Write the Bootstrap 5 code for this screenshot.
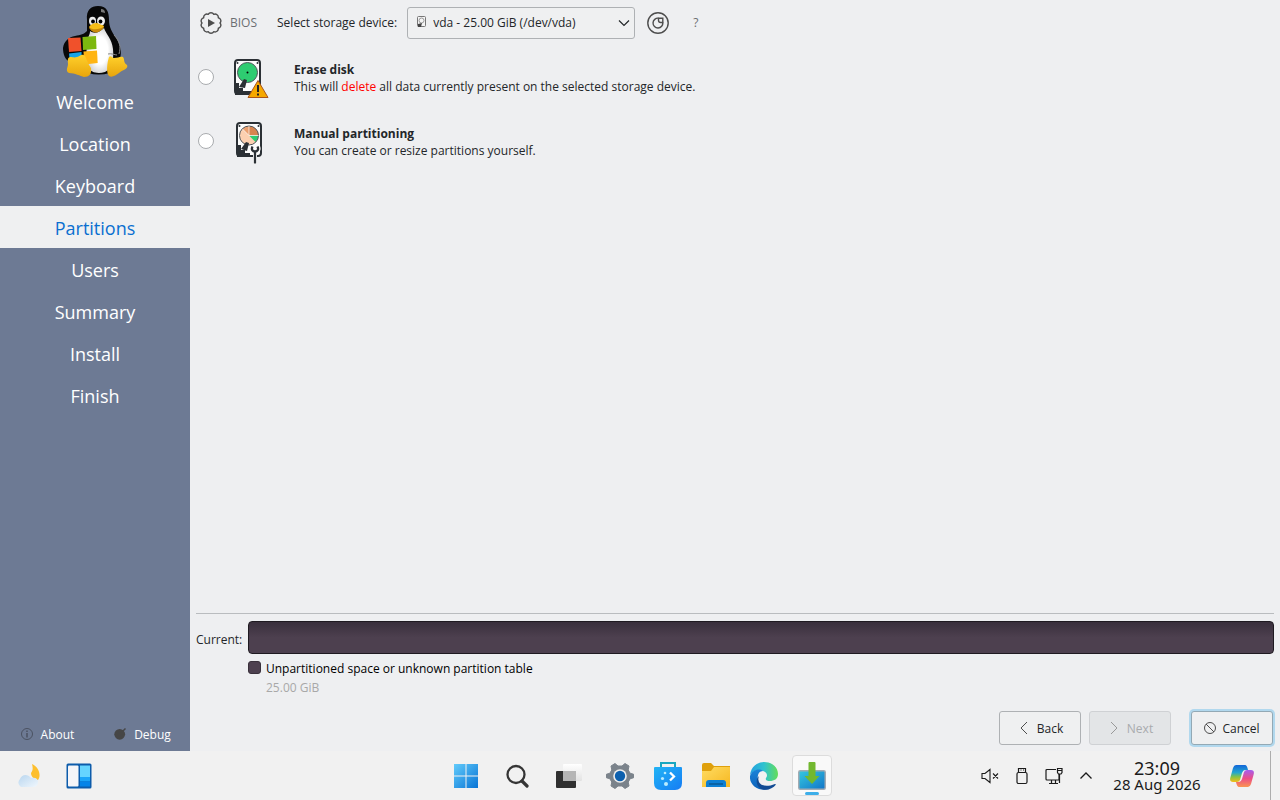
<!DOCTYPE html>
<html lang="en">
<head>
<meta charset="utf-8">
<meta name="viewport" content="width=device-width, initial-scale=1">
<title>Installer – Partitions</title>
<link href="https://cdn.jsdelivr.net/npm/bootstrap@5.3.0/dist/css/bootstrap.min.css" rel="stylesheet">
<style>
  body { font: 13px/17px "Noto Sans", "Open Sans", sans-serif; background: #eeeff1; color: #232629; }
  button { font: inherit; color: inherit; background: none; border: 0; padding: 0; }
  svg { display: block; flex: none; }
  .app-text { font-family: "Open Sans", sans-serif; font-size: 12px; }

  .sidebar { width: 190px; background: #6d7a94; color: #fff; }
  .sidebar .logo { height: 80px; }
  .step { height: 42px; padding-top: 2px; font-size: 18px; color: #fff; text-decoration: none; }
  .step.active { background: #eff0f1; color: #0a6fd0; }
  .side-foot { height: 34px; }

  .page { padding: 6px; }
  .toolbar { height: 33px; }
  .toolbar .mode { color: #6b6e71; }
  .device-box { position: relative; width: 228px; margin-left: 10px; }
  .device-box svg { position: absolute; left: 10px; top: 9px; pointer-events: none; }
  .device { appearance: none; font: inherit; color: inherit; height: 32px; padding: 0 28px 0 25px; border: 1px solid #aeb1b4; border-radius: 3px;
    background: #eff0f1 url("data:image/svg+xml,%3Csvg xmlns='http://www.w3.org/2000/svg' width='12' height='8'%3E%3Cpath d='M1 1.500l5 5 5-5' fill='none' stroke='%23232629' stroke-width='1.200'/%3E%3C/svg%3E") no-repeat right 4px center / 12px 8px; }
  .choices { margin-top: 9px; }
  .choice { height: 64px; }
  .choice label { padding-top: 13px; }
  .choice input { width: 16px; height: 16px; margin: 0 0 0 2px; background-color: #fff; border: 1px solid #a9acaf; }
  .choice .pic { width: 36px; margin: 0 25px 0 19px; }
  .del { color: #f00; }

  .rule { border-top: 1px solid #b9bcbf; margin-bottom: 7px; }
  .bar-label { width: 52px; padding-top: 3px; }
  .disk-bar { height: 33px; border: 1px solid #1f1a21; border-radius: 4px; background: linear-gradient(#392f3c, #4d404f 50%, #4d404f); }
  .legend { margin: 6px 0 0 52px; gap: 0 5px; }
  .swatch { width: 13px; height: 13px; border: 1px solid #39303b; border-radius: 3px; background: #4d404f; margin-top: 1px; }
  .size { color: #a8a8a8; margin-top: 2px; }
  .nav-row { margin-top: 15px; gap: 8px; }
  .nav-btn { width: 82px; height: 34px; border: 1px solid #aeb1b4; border-radius: 3px; background: #eff0f1; gap: 6px; }
  .nav-btn:disabled { background: #e3e5e7; border-color: #cfd1d4; color: #a9abae; }
  .nav-btn.focused { margin-left: 12px; border-color: #93a9b5; box-shadow: 0 0 0 2px #b1d8ee; margin-right: 1px; }

  .taskbar { height: 49px; background: #f1f1f1; display: grid; grid-template-columns: 1fr auto 1fr; padding-right: 4px; color: #1b1b1b; }
  .task { width: 48px; height: 49px; }
  .task.wide { width: 52px; }
  .task.running { position: relative; }
  .task.running span { width: 40px; height: 41px; border: 1px solid #dcdcdc; border-radius: 4px; background: #f9f9f9; }
  .task.running::after { content: ""; position: absolute; bottom: 5px; left: 17px; width: 14px; height: 3px; border-radius: 2px; background: #3daee9; }
  .tray { width: 32px; height: 49px; }
  .clock { width: 102px; margin: 0 12px 0 4px; font-size: 15px; line-height: 16px; }
  .clock .time { font-size: 18px; }
  .copilot { width: 44px; margin-right: 6px; }
  .peek { width: 6px; border-left: 1px solid #adadad; }
</style>
</head>
<body>
<div class="d-flex flex-column min-vh-100">
  <div class="d-flex flex-grow-1 app-text">
    <aside class="sidebar d-flex flex-column flex-shrink-0">
      <div class="logo d-flex justify-content-center pt-1">
        <svg width="70" height="76" viewBox="0 0 70 76">
          <defs><linearGradient id="ft" x2="0" y2="1"><stop stop-color="#ffd02b"/><stop offset="1" stop-color="#e8a50c"/></linearGradient>
          <radialGradient id="bl"><stop offset=".6" stop-color="#fff"/><stop offset="1" stop-color="#d9d9d9"/></radialGradient></defs>
          <path d="M27 16C26 6 31 2 38 2c9 0 11 6 11 14 0 7 3 12 7 18 5 8 7 17 2 24l-8 11q-12 3-22 0L10 58c-5-2-7-8-7-14 1-7 6-11 12-12 6-1 9-2 12-5z" fill="#080808"/>
          <path d="M30 27c4 3 9 2 14-3 2 6 8 11 9 21 1 11-1 20-8 23-7 2-14 1-17-5-2-8-2-22 0-29 1-3 2-4 2-7z" fill="url(#bl)"/>
          <path d="M41 5q4 0 4 4l-4-1z" fill="#777"/>
          <ellipse cx="32.500" cy="17" rx="3.500" ry="4.200" fill="#eee"/><ellipse cx="41" cy="17" rx="4" ry="4.500" fill="#eee"/>
          <circle cx="33" cy="17.500" r="1.900"/><circle cx="40.500" cy="17.500" r="1.900"/>
          <path d="M29 23c2-3 5-4 7-4s6 2 8 3c0 3-6 6-8 6s-6-3-7-5z" fill="#f6bd18"/><path d="M29 23.500c4 3 11 2 15-1-2 4-6 6-8 6s-6-2-7-5z" fill="#c98a0a"/>
          <path d="M48 50c3-1 7 1 9 1M54 31c6 6 7 12 5 19" fill="none" stroke="#888"/>
          <path d="M8 34l12.500-.500 1 13.500L9 48z" fill="#f0512b"/><path d="M22.500 33L36 32l.500 13-13.500 1z" fill="#7cb80f"/><path d="M9 49.500l12.500-1.500.500 11H10z" fill="#18a4e8"/><path d="M23.500 47.500l13.500-1 .700 12.500-13.500 1.500z" fill="#ffb513"/>
          <path d="M10 53c3 0 4 1 7 0 3-1 5-4 8-1 2 4 3 8 6 12 1 6-2 9-7 9-4-1-9-4-15-4-4-2-1-6-1-9 0-3-1-6 2-7z" fill="url(#ft)"/>
          <path d="M49 53c2-2 3 1 5 1 4 0 6-2 9-1 2 3 0 5 4 8 2 4-5 5-8 8-3 2-7 5-10 3-3-3-2-13 0-19z" fill="url(#ft)"/>
        </svg>
      </div>
      <nav class="d-flex flex-column">
        <a href="#" class="step d-flex align-items-center justify-content-center">Welcome</a>
        <a href="#" class="step d-flex align-items-center justify-content-center">Location</a>
        <a href="#" class="step d-flex align-items-center justify-content-center">Keyboard</a>
        <a href="#" class="step active d-flex align-items-center justify-content-center" aria-current="step">Partitions</a>
        <a href="#" class="step d-flex align-items-center justify-content-center">Users</a>
        <a href="#" class="step d-flex align-items-center justify-content-center">Summary</a>
        <a href="#" class="step d-flex align-items-center justify-content-center">Install</a>
        <a href="#" class="step d-flex align-items-center justify-content-center">Finish</a>
      </nav>
      <div class="side-foot d-flex mt-auto">
        <button type="button" class="d-flex w-50 align-items-center justify-content-center gap-2">
          <svg width="12" height="12" viewBox="0 0 12 12" fill="none" stroke="#4b5261"><circle cx="6" cy="6" r="5.500"/><path d="M6 5v4.500M6 2.500V4" stroke-width="1.500"/></svg>
          About</button>
        <button type="button" class="d-flex w-50 align-items-center justify-content-center gap-2">
          <svg width="12" height="12" viewBox="0 0 12 12"><circle cx="5.700" cy="6.300" r="5.400" fill="#464646"/><path d="M8.500 3.500l3-3" stroke="#464646" stroke-width="1.500"/></svg>
          Debug</button>
      </div>
    </aside>

    <main class="page d-flex flex-column flex-grow-1">
      <div class="toolbar d-flex align-items-center">
        <svg class="ms-1" width="22" height="22" viewBox="0 0 22 22"><path d="M20 11A3.200 3.200 0 0 1 18.300 16.300A3.200 3.200 0 0 1 13.800 19.600A3.200 3.200 0 0 1 8.200 19.600A3.200 3.200 0 0 1 3.700 16.300A3.200 3.200 0 0 1 2 11A3.200 3.200 0 0 1 3.700 5.700A3.200 3.200 0 0 1 8.200 2.400A3.200 3.200 0 0 1 13.800 2.400A3.200 3.200 0 0 1 18.300 5.700A3.200 3.200 0 0 1 20 11z" fill="none" stroke="#4d4d4d" stroke-width="1.400" stroke-linejoin="round"/><path d="M8 7l7 4-7 4z" fill="#4d4d4d"/></svg>
        <span class="mode ms-2">BIOS</span>
        <label for="device" class="ps-3 ms-1">Select storage device:</label>
        <div class="device-box">
          <select id="device" class="device w-100"><option>vda - 25.00 GiB (/dev/vda)</option></select>
          <svg width="9" height="12" viewBox="0 0 9 12"><rect x=".5" y=".5" width="8" height="10" rx="1" fill="#f5f5f5" stroke="#777"/><circle cx="4.500" cy="4.500" r="2.500" fill="none" stroke="#999"/><path d="M1 11V8l4-1-1 4z" fill="#444"/></svg>
        </div>
        <button type="button" class="ms-2 ps-1" aria-label="Partition table"><svg width="22" height="22" viewBox="0 0 22 22" fill="none" stroke="#4d4d4d" stroke-width="1.400"><circle cx="11" cy="11" r="10.200"/><path d="M11.500 6.200A4.900 4.900 0 1 0 15.800 10.500"/><path d="M11.500 6.200h4.300v4.300h-2q-2.300 0-2.300-2.300z"/></svg></button>
        <button type="button" class="mode ms-4">?</button>
      </div>

      <div class="choices">
        <div class="choice d-flex align-items-start">
          <div class="d-flex align-items-center">
            <input class="form-check-input" type="radio" name="mode" id="erase">
            <svg class="pic" height="58" viewBox="0 0 36 58">
              <g transform="translate(0 11)"><rect x="2" y="1" width="25" height="34" rx="3" fill="#fcfcfc" stroke="#2b3035" stroke-width="2"/>
              <circle cx="14.500" cy="13.500" r="10" fill="#2ecc71" stroke="#4d5358"/><circle cx="14.500" cy="13.500" r="1"/>
              <path d="M2 24h4v5h4v3h9v4H2zM6 28l5-8 3 1-2 8z" fill="#2b3035"/>
              <g fill="#2b3035"><circle cx="4.500" cy="4" r="1"/><circle cx="24.500" cy="4" r="1"/></g>
              <path d="M25 21.500L35 38.500H15z" fill="#f6a800" stroke="#a9541b" stroke-linejoin="round"/><path d="M25 26v7M25 34.500v2" stroke="#222" stroke-width="2"/></g>
            </svg>
          </div>
          <label for="erase"><strong>Erase disk</strong><br>This will <span class="del">delete</span> all data currently present on the selected storage device.</label>
        </div>
        <div class="choice d-flex align-items-start">
          <div class="d-flex align-items-center">
            <input class="form-check-input" type="radio" name="mode" id="manual">
            <svg class="pic" height="58" viewBox="0 0 36 58">
              <g transform="translate(2 10)"><rect x="2" y="1" width="24" height="33" rx="3" fill="#fcfcfc" stroke="#2b3035" stroke-width="2"/>
              <circle cx="14" cy="13.500" r="9.500" fill="#fcd0b0"/><path d="M14 13.500L7.500 7A9.500 9.500 0 0 1 14 4z" fill="#eaa070"/><path d="M14 13.500V4a9.500 9.500 0 0 1 9.500 9.500z" fill="#d8854f"/><path d="M14 13.500h9.500a9.500 9.500 0 0 1-3 6.500z" fill="#2ecc71"/><circle cx="14" cy="13.500" r="9.500" fill="none" stroke="#4d5358"/>
              <path d="M14 13.500V4M14 13.500L7.500 7M14 13.500h9.500" stroke="#fff" stroke-width=".7"/>
              <path d="M2 23h4v5h4v3h5v4H2zM6 27l5-7 3 1-2 8z" fill="#2b3035"/>
              <g fill="#2b3035"><circle cx="4.500" cy="4" r="1"/><circle cx="23.500" cy="4" r="1"/></g>
              <path d="M17 24.500c-1.500 3 0 5 3 5s4.500-2 3-5M20 29v13" fill="none" stroke="#fcfcfc" stroke-width="4"/>
              <path d="M17.500 24.500c-1.500 3 0 5 2.500 5s4-2 2.500-5M20 29v12.500" fill="none" stroke="#2b3035" stroke-width="2.300"/></g>
            </svg>
          </div>
          <label for="manual"><strong>Manual partitioning</strong><br>You can create or resize partitions yourself.</label>
        </div>
      </div>

      <div class="mt-auto">
        <div class="rule"></div>
        <div class="d-flex align-items-center"><span class="bar-label">Current:</span><div class="disk-bar flex-grow-1"></div></div>
        <div class="legend d-flex">
          <span class="swatch"></span>
          <div class="text-black">Unpartitioned space or unknown partition table<div class="size">25.00 GiB</div></div>
        </div>
        <div class="nav-row d-flex justify-content-end">
          <button type="button" class="nav-btn d-flex align-items-center justify-content-center"><svg width="14" height="14" viewBox="0 0 14 14" fill="none" stroke="#4d4d4d"><path d="M10 1L4 7l6 6"/></svg>Back</button>
          <button type="button" class="nav-btn d-flex align-items-center justify-content-center" disabled><svg width="14" height="14" viewBox="0 0 14 14" fill="none" stroke="#999"><path d="M4 1l6 6-6 6"/></svg>Next</button>
          <button type="button" class="nav-btn focused d-flex align-items-center justify-content-center"><svg width="12" height="12" viewBox="0 0 12 12" fill="none" stroke="#4d4d4d"><circle cx="6" cy="6" r="5.500"/><path d="M2 2l8 8"/></svg>Cancel</button>
        </div>
      </div>
    </main>
  </div>

  <footer class="taskbar">
    <div class="d-flex align-items-center ps-3">
      <button type="button" aria-label="Weather"><svg width="24" height="26" viewBox="0 0 24 26"><defs><linearGradient id="cl" x2="1" y2="1"><stop stop-color="#b9d6ef"/><stop offset="1" stop-color="#f0f7fd"/></linearGradient></defs><path d="M16 1c8 4 9 12 6 16-3 0-7-3-7-7 2-3 2-5 1-9z" fill="#fdbf2d"/><path d="M5 24a5 5 0 0 1-1-8c2-5 8-5 11-1 5-1 7 1 7 4s-2 5-5 5z" fill="url(#cl)"/></svg></button>
      <button type="button" class="ms-4" aria-label="Widgets"><svg width="30" height="26" viewBox="0 0 30 26"><rect x="2.500" y=".5" width="25" height="25" rx="1.500" fill="#0d5cab"/><rect x="4" y="2.500" width="10.500" height="21" rx="1" fill="#f5f5f8"/><path d="M16 2.500h10V14H16z" fill="#66d5ff"/><path d="M16 14h10v4.500H16z" fill="#1ba5f8"/><path d="M16 18.500h10v5H16z" fill="#0584e8"/></svg></button>
    </div>
    <div class="d-flex">
      <button type="button" class="task wide d-flex align-items-center justify-content-center" aria-label="Start"><svg width="24" height="24" viewBox="0 0 24 24"><defs><linearGradient id="wn" x2="1" y2="1"><stop stop-color="#62cbfb"/><stop offset="1" stop-color="#0874d5"/></linearGradient></defs><path d="M0 0h11.500v11.500H0zM12.500 0H24v11.500H12.500zM0 12.500h11.500V24H0zM12.500 12.500H24V24H12.500z" fill="url(#wn)"/></svg></button>
      <button type="button" class="task wide d-flex align-items-center justify-content-center" aria-label="Search"><svg width="24" height="24" viewBox="0 0 24 24" fill="none" stroke="#353535"><circle cx="10" cy="10.500" r="8.500" stroke-width="2.300"/><path d="M16 17l5 5" stroke-width="3.200" stroke-linecap="round"/></svg></button>
      <button type="button" class="task wide d-flex align-items-center justify-content-center" aria-label="Task view"><svg width="28" height="26" viewBox="0 0 28 26"><defs><linearGradient id="tv" x2="0" y2="1"><stop stop-color="#fff"/><stop offset="1" stop-color="#e2e2e2"/></linearGradient></defs><rect x="0" y="8" width="20" height="17" rx="1" fill="#303030"/><rect x="7" y="1" width="19" height="17" rx="1" fill="url(#tv)"/><path d="M7 8h13v10H7z" fill="#b5b5b5"/></svg></button>
      <button type="button" class="task d-flex align-items-center justify-content-center" aria-label="Settings"><svg width="28" height="28" viewBox="0 0 28 28"><path d="M9 1.500l3 2.500h4l3-2.500 4 2.500-.8 4 2 3.300 3.300.9v3.600l-3.300.9-2 3.300.8 4-4 2.500-3-2.500h-4l-3 2.500L5 24l.8-4-2-3.300-3.300-.9v-3.600l3.300-.9 2-3.300L5 4z" fill="#7b838b" stroke="#7b838b" stroke-linejoin="round"/><circle cx="14" cy="14" r="6.800" fill="#eee"/><circle cx="14" cy="14" r="5.200" fill="#0d60ae"/></svg></button>
      <button type="button" class="task d-flex align-items-center justify-content-center" aria-label="Software"><svg width="28" height="28" viewBox="0 0 28 28"><defs><linearGradient id="bag" x2="1" y2="1"><stop stop-color="#22b4f5"/><stop offset="1" stop-color="#157cf4"/></linearGradient></defs><path d="M7 7V1h14v6" fill="none" stroke="#19a7c0" stroke-width="2"/><path d="M0 6q0-1 1-1h26q1 0 1 1v15q0 7-7 7H7q-7 0-7-7z" fill="url(#bag)"/><path d="M16 10.500l4 4-4 4" fill="none" stroke="#fff" stroke-width="2.300"/><g fill="#b9ecff"><circle cx="11" cy="11" r="1.300"/><circle cx="8.500" cy="16.500" r="1.600"/><circle cx="12" cy="22" r="2"/></g></svg></button>
      <button type="button" class="task d-flex align-items-center justify-content-center" aria-label="Files"><svg width="28" height="25" viewBox="0 0 28 25"><defs><linearGradient id="fo" x2="1" y2="1"><stop stop-color="#ffdc62"/><stop offset="1" stop-color="#f6b720"/></linearGradient></defs><path d="M0 2q0-2 2-2h7l3 3h16v8H0z" fill="#dfa00c"/><path d="M0 8h9l3-4h16v20H0z" fill="url(#fo)"/><path d="M4 24v-4q0-3 3-3h14q3 0 3 3v4z" fill="#0c7fd4"/><path d="M7 21h14" stroke="#075896" stroke-width="1.500"/></svg></button>
      <button type="button" class="task d-flex align-items-center justify-content-center" aria-label="Browser"><svg width="28" height="28" viewBox="0 0 28 28"><defs><linearGradient id="eg"><stop stop-color="#259fe0"/><stop offset=".5" stop-color="#2fc3cf"/><stop offset="1" stop-color="#64dd58"/></linearGradient><linearGradient id="eb" x2="0" y2="1"><stop stop-color="#1b83d8"/><stop offset="1" stop-color="#0d62b9"/></linearGradient></defs><path d="M0 13C1 5 7 0 14 0c9 0 14 6 14 12 0 5-4 7-8 7-3 0-5-1-4-3 2-2 1-6-3-7C8 7 3 9 0 13z" fill="url(#eg)"/><path d="M0 14C2 8 9 6 13 9c-4 0-6 4-5 9 1 6 6 9 11 9-9 3-20-3-19-13z" fill="url(#eb)"/><path d="M9 14c-3 7 4 13 16 8l1 .500c-3 4-8 6-13 5-7-2-8-10-4-13.500z" fill="#124b93"/></svg></button>
      <button type="button" class="task running d-flex align-items-center justify-content-center" aria-label="Installer"><span class="d-flex align-items-center justify-content-center"><svg width="28" height="30" viewBox="0 0 28 30"><defs><linearGradient id="mo" x2="1" y2="1"><stop stop-color="#36c9e0"/><stop offset="1" stop-color="#1174c8"/></linearGradient></defs><rect x=".75" y="9.750" width="26.500" height="18.500" rx="1.500" fill="url(#mo)" stroke="#a3abb3" stroke-width="1.500"/><path d="M10.500 2q0-1 1-1h5q1 0 1 1v13h4L14 23l-7.500-8h4z" fill="#72b82f"/></svg></span></button>
    </div>
    <div class="d-flex justify-content-end">
      <button type="button" class="tray d-flex align-items-center justify-content-center" aria-label="Muted"><svg width="18" height="16" viewBox="0 0 18 16" fill="none" stroke="#1b1b1b" stroke-width="1.100"><path d="M1 5.500h3l5-4v13l-5-4H1zM12 5.500l5 5M17 5.500l-5 5"/></svg></button>
      <button type="button" class="tray d-flex align-items-center justify-content-center" aria-label="Removable devices"><svg width="14" height="18" viewBox="0 0 14 18" fill="none" stroke="#1b1b1b" stroke-width="1.200"><rect x="2" y="5.500" width="10" height="11" rx="1.500"/><path d="M3.500 5V1.500h7V5M5.500 3h1M8 3h1"/></svg></button>
      <button type="button" class="tray d-flex align-items-center justify-content-center" aria-label="Network"><svg width="18" height="18" viewBox="0 0 18 18" fill="none" stroke="#1b1b1b" stroke-width="1.200"><path d="M11 2.500H2q-1 0-1 1V12q0 1 1 1h12V7.500M4 16.500h9M6.500 13v3M10.500 13v3M12.500 1.500H17v4l-1 1.500h-2.500l-1-1.500zM14.500 7v9M12.500 3.500H17"/></svg></button>
      <button type="button" class="tray d-flex align-items-center justify-content-center" aria-label="Show hidden icons"><svg width="14" height="10" viewBox="0 0 14 10" fill="none" stroke="#1b1b1b" stroke-width="1.300"><path d="M1.500 7.500L7 2l5.500 5.500"/></svg></button>
      <button type="button" class="clock d-flex flex-column align-items-center justify-content-center text-nowrap"><span class="time">23:09</span><span>28 Aug 2026</span></button>
      <button type="button" class="copilot d-flex align-items-center justify-content-center" aria-label="Copilot"><svg width="24" height="22" viewBox="0 0 24 22"><defs><linearGradient id="ca" x2="0" y2="1"><stop stop-color="#1266d9"/><stop offset=".45" stop-color="#22a7d0"/><stop offset=".7" stop-color="#86c346"/><stop offset="1" stop-color="#f6bd18"/></linearGradient><linearGradient id="cb" x2="0" y2="1"><stop stop-color="#a45df0"/><stop offset=".5" stop-color="#ec4d87"/><stop offset="1" stop-color="#fa9550"/></linearGradient></defs><path d="M6 0h9q2 0 3 5h-3q-2 0-3 3l-2 7q-1 2-3 2H3q-4 0-2.500-5L3 3q1-3 3-3z" fill="url(#ca)"/><path d="M18 22H9q-2 0-3-5h3q2 0 3-3l2-7q1-2 3-2h4q4 0 2.500 5L21 19q-1 3-3 3z" fill="url(#cb)"/></svg></button>
      <button type="button" class="peek" aria-label="Show desktop"></button>
    </div>
  </footer>
</div>
<script src="https://cdn.jsdelivr.net/npm/bootstrap@5.3.0/dist/js/bootstrap.bundle.min.js"></script>
</body>
</html>
